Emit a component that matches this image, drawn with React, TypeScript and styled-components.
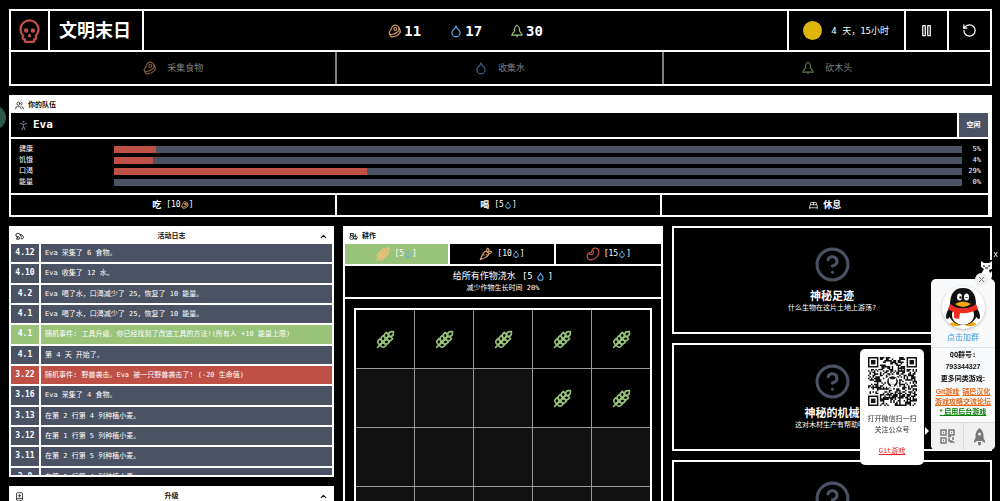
import React from "react";
import styled, { createGlobalStyle } from "styled-components";
import {
  Bean, Beef, BedDouble, BookPlus, Carrot, ChevronUp, CircleHelp, Droplet,
  PersonStanding, RotateCcw, Tractor, Users, Wheat,
} from "lucide-react";

const c = {
  slate: "#4b5263",
  red: "#be5046",
  green: "#98c379",
  orange: "#d19a66",
  blue: "#61afef",
  wheat: "#e5c07b",
  line: "#ffffff",
};

const Global = createGlobalStyle`
  * { box-sizing: border-box; }
  html, body { margin: 0; background: #000; }
  body, button {
    font-family: "DejaVu Sans Mono", "Noto Sans CJK SC", monospace;
    color: #fff;
  }
  body { font-size: 7px; line-height: 10px; }
  button { font-size: 7px; line-height: 10px; margin: 0; padding: 0; border: 0; background: #000; cursor: pointer; }
  h1, h2, h3, p, ol, dl, dd { margin: 0; padding: 0; }
  svg { display: block; flex: none; }
`;

const Page = styled.main`
  height: 100vh;
  overflow: hidden;
  padding: 9px 8px 0 9px;
  display: flex;
  flex-direction: column;
  gap: 9px;
`;

const Panel = styled.section<{ $wideEdge?: boolean }>`
  flex: none;
  border: 2px solid ${c.line};
  border-right-width: ${(p) => (p.$wideEdge ? 4 : 2)}px;
  background: #000;
`;

const PanelHead = styled.header`
  height: 16px;
  padding: 0 4px;
  display: flex;
  align-items: center;
  gap: 4px;
  background: #fff;
  color: #111;
`;

const PanelTitle = styled.h2<{ $center?: boolean }>`
  flex: 1;
  font-size: 7px;
  font-weight: 700;
  text-align: ${(p) => (p.$center ? "center" : "left")};
`;

const CollapseButton = styled.button`
  background: none;
  color: #111;
`;

const TopRow = styled.div`
  display: flex;
  height: 41px;
  border-bottom: 2px solid ${c.line};
`;

const LogoCell = styled.div`
  display: flex;
  align-items: center;
  padding: 0 5px;
  border-right: 2px solid ${c.line};
  color: ${c.red};
`;

const TitleCell = styled.h1`
  display: flex;
  align-items: center;
  padding: 0 11px 0 9px;
  border-right: 2px solid ${c.line};
  font-size: 18px;
  line-height: 24px;
`;

const Stats = styled.div`
  flex: 1;
  display: flex;
  align-items: center;
  justify-content: center;
  gap: 28px;
`;

const Stat = styled.div<{ $color: string }>`
  display: flex;
  align-items: center;
  gap: 2px;
  font-size: 14px;
  line-height: 18px;
  font-weight: 700;
  svg { color: ${(p) => p.$color}; }
`;

const Clock = styled.div`
  display: flex;
  align-items: center;
  gap: 9px;
  padding: 0 15px 0 14px;
  border-left: 2px solid ${c.line};
  font-size: 9px;
`;

const Sun = styled.span`
  width: 19px;
  height: 19px;
  border-radius: 50%;
  background: #ddb50b;
`;

const IconButton = styled.button`
  width: 43px;
  display: grid;
  place-items: center;
  border-left: 2px solid ${c.line};
`;

const Thirds = styled.div`
  display: grid;
  grid-template-columns: repeat(3, minmax(0, 1fr));
`;

const GatherButton = styled.button<{ $color: string }>`
  height: 32px;
  display: flex;
  align-items: center;
  justify-content: center;
  gap: 10px;
  font-size: 9px;
  color: #7f7f7f;
  &:not(:last-child) { border-right: 2px solid #7f7f7f; }
  svg { color: ${(p) => p.$color}; opacity: 0.6; }
`;

const NameRow = styled.div`
  display: flex;
  height: 26px;
  border-bottom: 2px solid ${c.line};
`;

const Name = styled.h3`
  flex: 1;
  display: flex;
  align-items: center;
  gap: 3px;
  padding-left: 6px;
  font-size: 11px;
  svg { color: #667089; }
`;

const StatusButton = styled.button`
  width: 31px;
  border-left: 2px solid ${c.line};
  background: ${c.slate};
  font-weight: 700;
`;

const Vitals = styled.dl`
  display: grid;
  gap: 4px;
  padding: 7px 7px 7px 8px;
  border-bottom: 2px solid ${c.line};
`;

const Vital = styled.div`
  display: grid;
  grid-template-columns: 95px minmax(0, 1fr) 19px;
  align-items: center;
  height: 7px;
  line-height: 7px;
  dd:last-child { text-align: right; }
`;

const Track = styled.dd`
  height: 7px;
  background: ${c.slate};
`;

const Fill = styled.div`
  height: 100%;
  background: ${c.red};
`;

const CareButton = styled.button`
  height: 20px;
  display: flex;
  align-items: center;
  justify-content: center;
  gap: 5px;
  &:not(:last-child) { border-right: 2px solid ${c.line}; }
  strong { font-size: 9px; }
`;

const Cost = styled.span<{ $color?: string; $big?: boolean }>`
  display: inline-flex;
  align-items: center;
  gap: ${(p) => (p.$big ? 3 : 0)}px;
  font-size: ${(p) => (p.$big ? 9 : 8)}px;
  svg { color: ${(p) => p.$color || c.blue}; }
`;

const Columns = styled.div`
  display: grid;
  grid-template-columns: minmax(0, 65fr) minmax(0, 64fr) minmax(0, 64fr);
  gap: 9px;
  align-items: start;
`;

const Column = styled.div`
  display: flex;
  flex-direction: column;
  gap: 9px;
`;

const LogScroll = styled.div`
  height: 231px;
  overflow: hidden;
`;

const LogList = styled.ol`
  list-style: none;
  height: 242px;
  display: grid;
  grid-auto-rows: minmax(0, 1fr);
  gap: 2px;
  background: ${c.line};
`;

const tones = { plain: c.slate, good: c.green, bad: c.red };

const LogRow = styled.li<{ $tone: keyof typeof tones }>`
  display: grid;
  grid-template-columns: 28px minmax(0, 1fr);
  gap: 2px;
  > * {
    display: flex;
    align-items: center;
    background: ${(p) => tones[p.$tone]};
  }
  time { justify-content: center; font-size: 8px; font-weight: 700; }
  span { padding-left: 4px; white-space: nowrap; }
`;

const CropButton = styled.button<{ $selected?: boolean; $color: string }>`
  height: 20px;
  display: flex;
  align-items: center;
  justify-content: center;
  gap: 4px;
  background: ${(p) => (p.$selected ? c.green : "#000")};
  &:not(:last-child) { border-right: 2px solid ${c.line}; }
  > svg { color: ${(p) => p.$color}; }
`;

const WaterButton = styled.button`
  width: 100%;
  height: 35px;
  display: flex;
  flex-direction: column;
  align-items: center;
  justify-content: center;
  border-top: 2px solid ${c.line};
  border-bottom: 2px solid ${c.line};
  > span:first-child {
    display: flex;
    gap: 6px;
    font-size: 9px;
    line-height: 13px;
  }
`;

const Field = styled.div`
  margin: 9px;
  display: grid;
  grid-template-columns: repeat(5, minmax(0, 1fr));
  gap: 1px;
  border: 2px solid ${c.line};
  background: #999;
`;

const Plot = styled.button<{ $planted: boolean }>`
  aspect-ratio: 1;
  display: grid;
  place-items: center;
  background: ${(p) => (p.$planted ? "#000" : "#111")};
  color: ${c.green};
`;

const Mystery = styled.article`
  height: 108px;
  padding-top: 18px;
  border: 2px solid ${c.line};
  display: flex;
  flex-direction: column;
  align-items: center;
  svg { color: ${c.slate}; }
  h2 { margin-top: 7px; font-size: 11px; line-height: 14px; }
  p { line-height: 9px; }
`;

const SideBubble = styled.div`
  position: fixed;
  left: -19px;
  top: 105px;
  width: 25px;
  height: 25px;
  border-radius: 50%;
  background: #2b5848;
`;

const GroupBox = styled.aside`
  position: fixed;
  right: 5px;
  top: 279px;
  width: 64px;
  height: 171px;
  border-radius: 5px;
  background: #f8f9fb;
  color: #111;
  display: flex;
  flex-direction: column;
  text-align: center;
  font-weight: 700;
`;

const JoinLink = styled.a`
  display: flex;
  flex-direction: column;
  align-items: center;
  height: 69px;
  padding-top: 7px;
  gap: 4px;
  border-bottom: 1px solid #e2e4e8;
  color: #3498db;
  font-size: 8px;
  font-weight: 400;
  text-decoration: none;
`;

const Avatar = styled.span`
  width: 43px;
  height: 43px;
  border-radius: 50%;
  background: #fff;
  box-shadow: 0 1px 3px #0004;
`;

const GroupInfo = styled.div`
  flex: 1;
  padding-top: 1px;
  line-height: 12px;
  p + p { font-family: "Liberation Sans", "Noto Sans CJK SC", sans-serif; }
`;

const LinkLines = styled.div`
  display: flex;
  flex-wrap: wrap;
  justify-content: center;
  column-gap: 3px;
  padding-top: 2px;
  font-family: "Liberation Sans", "Noto Sans CJK SC", sans-serif;
  line-height: 10px;
`;

const GroupLink = styled.a<{ $color: string }>`
  color: ${(p) => p.$color};
  white-space: nowrap;
`;

const Tools = styled.div`
  display: grid;
  grid-template-columns: 1fr 1fr;
  height: 28px;
  border-top: 1px solid #ddd;
  border-radius: 0 0 5px 5px;
  background: #f0f0f0;
  overflow: hidden;
`;

const ToolButton = styled.button`
  display: grid;
  place-items: center;
  background: none;
  color: #777;
  & + & { border-left: 1px solid #ddd; }
`;

const CloseDot = styled.button`
  position: absolute;
  right: 7px;
  top: -6px;
  width: 13px;
  height: 13px;
  border-radius: 50%;
  background: #eee;
  display: grid;
  place-items: center;
`;

const Cat = styled.div`
  position: fixed;
  right: 6px;
  top: 260px;
  width: 15px;
  height: 20px;
  background: #000;
`;

const CatClose = styled.button`
  position: fixed;
  right: 2px;
  top: 250px;
  background: none;
  font-size: 8px;
`;

const ScanBox = styled.aside`
  position: fixed;
  right: 76px;
  top: 349px;
  width: 64px;
  height: 116px;
  padding-top: 8px;
  border-radius: 5px;
  background: #fff;
  color: #333;
  display: flex;
  flex-direction: column;
  align-items: center;
  text-align: center;
  &::after {
    content: "";
    position: absolute;
    right: -5px;
    top: 78px;
    border: 4px solid transparent;
    border-left: 4px solid #fff;
    border-right: 0;
  }
  p { margin-top: 8px; line-height: 11px; }
  a { margin-top: 10px; color: #e22; }
`;

const SkullIcon = () => (
  <svg width="27" height="27" viewBox="0 0 24 24" fill="none" stroke="currentColor" strokeWidth="2" strokeLinecap="round" strokeLinejoin="round">
    <circle cx="9" cy="12" r="1" />
    <circle cx="15" cy="12" r="1" />
    <path d="M8 20v2h8v-2" />
    <path d="m12.5 17-.5-1-.5 1h1z" />
    <path d="M16 20a2 2 0 0 0 1.56-3.25 8 8 0 1 0-11.12 0A2 2 0 0 0 8 20" />
  </svg>
);

const TreeIcon = () => (
  <svg width="14" height="14" viewBox="0 0 24 24" fill="none" stroke="currentColor" strokeWidth="2" strokeLinecap="round" strokeLinejoin="round">
    <path d="M12 2C9.500 4 7.500 6.500 7.500 9c0 1 .5 1.500.5 2.500C6.500 13.500 4 16.500 3 19h18c-1-2.500-3.500-5.500-5-7.500 0-1 .5-1.500.5-2.500 0-2.500-2-5-4.500-7z" />
    <path d="M12 19v3" />
  </svg>
);

const LogIcon = () => (
  <svg width="9" height="9" viewBox="0 0 24 24" fill="none" stroke="currentColor" strokeWidth="2.500" strokeLinecap="round" strokeLinejoin="round">
    <path d="M5 13C1 11 1 5 6 4c3-1 6 1 8 3 4-1 8 3 9 8l-3 3h-4" />
    <path d="M5 13h5c2 0 3 2 2 4l-1 2H4l3-5" />
    <path d="M14 7l3 6" />
  </svg>
);

const PauseIcon = () => (
  <svg width="15" height="15" viewBox="0 0 24 24" fill="none" stroke="currentColor" strokeWidth="2" strokeLinejoin="round">
    <rect x="6" y="4" width="4" height="16" />
    <rect x="14" y="4" width="4" height="16" />
  </svg>
);

const Penguin = () => (
  <svg width="43" height="43" viewBox="0 0 43 43">
    <ellipse cx="14" cy="38" rx="6" ry="2" fill="#f5a60a" />
    <ellipse cx="28" cy="38" rx="6" ry="2" fill="#f5a60a" />
    <path d="M8 21C4 26 3 32 5 33c1 0 3-2 4-4M34 21c4 5 5 11 3 12-1 0-3-2-4-4" fill="#111" />
    <ellipse cx="21" cy="27" rx="14" ry="12" fill="#111" />
    <ellipse cx="21" cy="29" rx="11" ry="10" fill="#fff" />
    <path d="M8 19C8 8 12 2 21 2s13 6 13 17c-6 5-20 5-26 0z" fill="#111" />
    <ellipse cx="17.500" cy="11" rx="2.500" ry="3.500" fill="#fff" />
    <ellipse cx="24.500" cy="11" rx="2.500" ry="3.500" fill="#fff" />
    <circle cx="18.500" cy="11.500" r="1.200" fill="#111" />
    <path d="M23.500 12q1-2 2 0" stroke="#111" fill="none" />
    <path d="M8 18q13 9 26 0l2 5q-8 5-18 4l-1 6-5-1v-6q-4-1-6-3z" fill="#f02b1d" />
    <path d="M13 18q8-5 16 0-8 6-16 0z" fill="#f9a90b" />
  </svg>
);

const CatIcon = () => (
  <svg width="15" height="20" viewBox="0 0 15 20">
    <path d="M2 1l3 2h5l3-2v8l-3 1 1 3 2-2v5l-1 4H6l-1-4-3-2 3-5-3-2z" fill="#fff" />
    <path d="M4 6h2M9 6h2M6 8h3" stroke="#000" />
  </svg>
);

const QR_SIZE = 33;

const inFinder = (x: number, y: number) =>
  (x < 8 && y < 8) || (x > QR_SIZE - 9 && y < 8) || (x < 8 && y > QR_SIZE - 9);

const qrPath = (() => {
  let seed = 77;
  let d = "";
  for (let y = 0; y < QR_SIZE; y++) {
    for (let x = 0; x < QR_SIZE; x++) {
      seed = (seed * 1103515245 + 12345) % 2147483648;
      if (!inFinder(x, y) && seed / 2147483648 > 0.48) d += `M${x} ${y}h1v1h-1z`;
    }
  }
  return d;
})();

const QrCode = () => (
  <svg width="49" height="49" viewBox="0 0 33 33">
    <path d={qrPath} fill="#111" />
    {[[0, 0], [26, 0], [0, 26]].map(([x, y]) => (
      <g key={`${x}-${y}`} fill="#111">
        <path fillRule="evenodd" d={`M${x} ${y}h7v7h-7zM${x + 1} ${y + 1}v5h5v-5z`} />
        <rect x={x + 2} y={y + 2} width="3" height="3" />
      </g>
    ))}
    <circle cx="16.500" cy="16.500" r="4.500" fill="#fff" />
    <circle cx="16.500" cy="16.500" r="3.600" fill="#111" />
    <path d="M14 14l1.500 1h2l1.500-1v3l-1 1.500h-3L14 17z" fill="#fff" />
    <path d="M15.500 18.500h2V20h-2z" fill="#fff" />
  </svg>
);

const QrIcon = () => (
  <svg width="15" height="15" viewBox="0 0 15 15" fill="none" stroke="currentColor" strokeWidth="1.500">
    <path d="M1 1h5v5H1zM9 1h5v5H9zM1 9h5v5H1zM3 3.500h1M11 3.500h1M3 11.500h1M8 7.500h3M9 9v3h2v2M13 8v3M12 12l2 2" />
  </svg>
);

const RocketIcon = () => (
  <svg width="15" height="18" viewBox="0 0 15 18" fill="currentColor">
    <path d="M7.500 0C4.500 2 3.500 5 3.500 8v2L2 13v2l3-2h5l3 2v-2l-1.500-3V8c0-3-1-6-4-8z" />
    <circle cx="7.500" cy="6" r="1.500" fill="#f0f0f0" />
    <path d="M6 14h3v2l-1.500 2L6 16z" />
  </svg>
);

const vitals = [
  { label: "健康", value: 5, fill: 5 },
  { label: "饥饿", value: 4, fill: 4.6 },
  { label: "口渴", value: 29, fill: 29.8 },
  { label: "能量", value: 0, fill: 0 },
];

const logs: { at: string; text: string; tone?: keyof typeof tones }[] = [
  { at: "4.12", text: "Eva 采集了 6 食物。" },
  { at: "4.10", text: "Eva 收集了 12 水。" },
  { at: "4.2", text: "Eva 喝了水，口渴减少了 25，恢复了 10 能量。" },
  { at: "4.1", text: "Eva 喝了水，口渴减少了 25，恢复了 10 能量。" },
  { at: "4.1", text: "随机事件: 工具升级。你已经找到了改进工具的方法!(所有人 +10 能量上限)", tone: "good" },
  { at: "4.1", text: "第 4 天 开始了。" },
  { at: "3.22", text: "随机事件: 野兽袭击。Eva 被一只野兽袭击了! (-20 生命值)", tone: "bad" },
  { at: "3.16", text: "Eva 采集了 4 食物。" },
  { at: "3.13", text: "在第 2 行第 4 列种植小麦。" },
  { at: "3.12", text: "在第 1 行第 5 列种植小麦。" },
  { at: "3.11", text: "在第 2 行第 5 列种植小麦。" },
  { at: "3.9", text: "在第 1 行第 4 列种植小麦。" },
];

const planted = new Set([0, 1, 2, 3, 4, 8, 9]);

const mysteries = [
  { title: "神秘足迹", text: "什么生物在这片土地上游荡?" },
  { title: "神秘的机械", text: "这对木材生产有帮助吗?" },
  { title: "神秘信号", text: "谁在发送信号?" },
];

const SmallDrop = () => <Droplet size={8} strokeWidth={3} />;

export default function App() {
  return (
    <>
      <Global />
      <Page>
        <Panel>
          <TopRow>
            <LogoCell><SkullIcon /></LogoCell>
            <TitleCell>文明末日</TitleCell>
            <Stats>
              <Stat $color={c.orange}><Beef size={14} />11</Stat>
              <Stat $color={c.blue}><Droplet size={14} />17</Stat>
              <Stat $color={c.green}><TreeIcon />30</Stat>
            </Stats>
            <Clock><Sun />4 天，15小时</Clock>
            <IconButton aria-label="暂停"><PauseIcon /></IconButton>
            <IconButton aria-label="重新开始"><RotateCcw size={15} /></IconButton>
          </TopRow>
          <Thirds>
            <GatherButton $color={c.orange}><Beef size={14} />采集食物</GatherButton>
            <GatherButton $color={c.blue}><Droplet size={14} />收集水</GatherButton>
            <GatherButton $color={c.green}><TreeIcon />砍木头</GatherButton>
          </Thirds>
        </Panel>

        <Panel $wideEdge>
          <PanelHead>
            <Users size={9} />
            <PanelTitle>你的队伍</PanelTitle>
          </PanelHead>
          <NameRow>
            <Name><PersonStanding size={13} strokeWidth={2} />Eva</Name>
            <StatusButton>空闲</StatusButton>
          </NameRow>
          <Vitals>
            {vitals.map((v) => (
              <Vital key={v.label}>
                <dt>{v.label}</dt>
                <Track><Fill style={{ width: `${v.fill}%` }} /></Track>
                <dd>{v.value}%</dd>
              </Vital>
            ))}
          </Vitals>
          <Thirds>
            <CareButton><strong>吃</strong><Cost $color={c.orange}>[10<Beef size={8} strokeWidth={3} />]</Cost></CareButton>
            <CareButton><strong>喝</strong><Cost>[5<SmallDrop />]</Cost></CareButton>
            <CareButton><BedDouble size={9} /><strong>休息</strong></CareButton>
          </Thirds>
        </Panel>

        <Columns>
          <Column>
            <Panel>
              <PanelHead>
                <LogIcon />
                <PanelTitle $center>活动日志</PanelTitle>
                <CollapseButton aria-label="收起活动日志"><ChevronUp size={9} strokeWidth={3} /></CollapseButton>
              </PanelHead>
              <LogScroll>
                <LogList>
                  {logs.map((l, i) => (
                    <LogRow key={i} $tone={l.tone || "plain"}>
                      <time>{l.at}</time>
                      <span>{l.text}</span>
                    </LogRow>
                  ))}
                </LogList>
              </LogScroll>
            </Panel>
            <Panel>
              <PanelHead>
                <BookPlus size={9} />
                <PanelTitle $center>升级</PanelTitle>
                <CollapseButton aria-label="收起升级"><ChevronUp size={9} strokeWidth={3} /></CollapseButton>
              </PanelHead>
            </Panel>
          </Column>

          <Panel>
            <PanelHead>
              <Tractor size={9} />
              <PanelTitle>耕作</PanelTitle>
            </PanelHead>
            <Thirds>
              <CropButton $selected $color={c.wheat} aria-label="小麦"><Wheat size={14} strokeWidth={3} /><Cost>[5<SmallDrop />]</Cost></CropButton>
              <CropButton $color={c.orange} aria-label="胡萝卜"><Carrot size={14} /><Cost>[10<SmallDrop />]</Cost></CropButton>
              <CropButton $color={c.red} aria-label="豆子"><Bean size={14} /><Cost>[15<SmallDrop />]</Cost></CropButton>
            </Thirds>
            <WaterButton>
              <span>给所有作物浇水<Cost $big>[5<Droplet size={9} strokeWidth={3} />]</Cost></span>
              <span>减少作物生长时间 20%</span>
            </WaterButton>
            <Field>
              {Array.from({ length: 25 }, (_, i) => (
                <Plot key={i} $planted={planted.has(i)} aria-label={`地块 ${i + 1}`}>
                  {planted.has(i) && <Wheat size={19} />}
                </Plot>
              ))}
            </Field>
          </Panel>

          <Column>
            {mysteries.map((m) => (
              <Mystery key={m.title}>
                <CircleHelp size={37} />
                <h2>{m.title}</h2>
                <p>{m.text}</p>
              </Mystery>
            ))}
          </Column>
        </Columns>
      </Page>

      <SideBubble />
      <Cat><CatIcon /></Cat>
      <CatClose aria-label="关闭小猫">x</CatClose>
      <ScanBox>
        <QrCode />
        <p>打开微信扫一扫<br />关注公众号</p>
        <a href="#git">Git游戏</a>
      </ScanBox>
      <GroupBox>
        <CloseDot aria-label="关闭">
          <svg width="7" height="7" viewBox="0 0 7 7" stroke="#777"><path d="M1 1l5 5M6 1L1 6" /></svg>
        </CloseDot>
        <JoinLink href="#join"><Avatar><Penguin /></Avatar>点击加群</JoinLink>
        <GroupInfo>
          <p>QQ群号:</p>
          <p>793344327</p>
          <p>更多同类游戏:</p>
          <LinkLines>
            <GroupLink $color="#e8691b" href="#git">Git游戏</GroupLink>
            <GroupLink $color="#e8691b" href="#guoba">锅巴汉化</GroupLink>
            <GroupLink $color="#e8691b" href="#forum">游戏攻略交流论坛</GroupLink>
            <GroupLink $color="#088008" href="#idle">* 启用后台游戏</GroupLink>
          </LinkLines>
        </GroupInfo>
        <Tools>
          <ToolButton aria-label="二维码"><QrIcon /></ToolButton>
          <ToolButton aria-label="返回顶部"><RocketIcon /></ToolButton>
        </Tools>
      </GroupBox>
    </>
  );
}
